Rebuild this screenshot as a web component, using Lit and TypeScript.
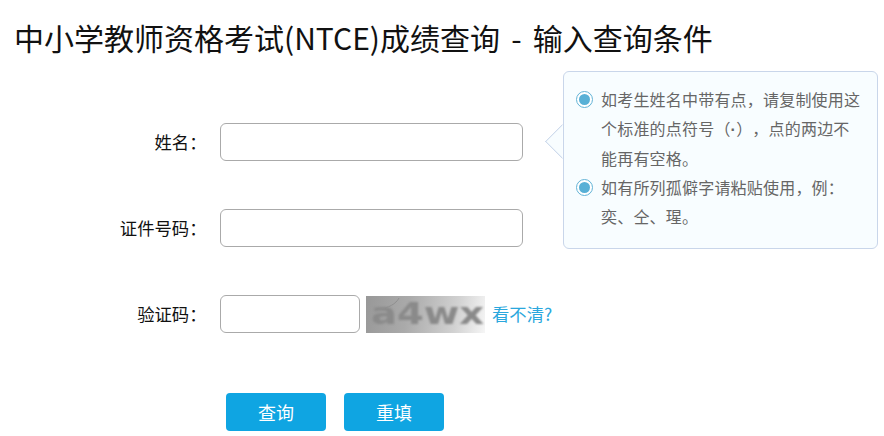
import { LitElement, html, css } from "lit";
import { customElement } from "lit/decorators.js";

@customElement("app-root")
export class AppRoot extends LitElement {
  static styles = css`
    :host {
      display: block;
      position: relative;
      width: 884px;
      height: 436px;
      overflow: hidden;
      background: #fff;
      font-family: "Noto Sans CJK SC", "Noto Sans", sans-serif;
      color: #111;
      text-spacing-trim: space-all;
    }
    .title {
      margin: 0;
      padding: 15px 0 0 14px;
      font-size: 30px;
      font-weight: 400;
      line-height: 44px;
      color: #111;
      white-space: nowrap;
      word-spacing: 4.5px;
    }
    .form {
      display: flex;
      flex-direction: column;
      gap: 48px;
      padding-top: 64px;
    }
    .row {
      display: flex;
      align-items: center;
      height: 38px;
    }
    .label {
      width: 206.5px;
      margin-right: 13.5px;
      text-align: right;
      font-size: 17.33px;
      line-height: 24px;
    }
    input {
      box-sizing: border-box;
      width: 303px;
      height: 38px;
      margin: 0;
      border: 1px solid #aaa;
      border-radius: 6px;
      background: #fff;
      outline: none;
    }
    input.short {
      width: 140px;
    }
    .captcha {
      position: relative;
      display: flex;
      align-items: center;
      justify-content: center;
      width: 119px;
      height: 37px;
      margin: 0 7px 0 6px;
      background: linear-gradient(100deg, #989898 0%, #aaa 35%, #d2d2d2 75%, #f6f6f6 100%);
      overflow: hidden;
    }
    .captcha span {
      font-family: "DejaVu Sans", sans-serif;
      font-weight: 700;
      font-size: 31px;
      line-height: 37px;
      color: #8a8a8a;
      transform: translate(2px, -1px) scaleX(1.24);
      filter: blur(1px);
    }
    .captcha svg {
      position: absolute;
      inset: 0;
      width: 100%;
      height: 100%;
      filter: blur(0.5px);
    }
    .link {
      font-size: 17.33px;
      line-height: 24px;
      color: #2aa7dd;
      text-decoration: none;
    }
    .actions {
      display: flex;
      gap: 18px;
      padding: 60px 0 0 226px;
    }
    button {
      width: 100px;
      height: 38px;
      padding: 0;
      border: none;
      border-radius: 4px;
      background: #0fa5e2;
      color: #fff;
      font-family: inherit;
      font-size: 18px;
    }
    .tip {
      position: absolute;
      left: 563px;
      top: 71px;
      box-sizing: border-box;
      width: 315px;
      height: 178px;
      padding: 13px 12px 0 12px;
      border: 1px solid #c9d6ea;
      border-radius: 6px;
      background: #f8fdff;
      color: #666;
      font-size: 16px;
      line-height: 29px;
      letter-spacing: 0.2px;
    }
    .tip::before {
      content: "";
      position: absolute;
      left: -14px;
      top: 57px;
      width: 25px;
      height: 25px;
      box-sizing: border-box;
      background: #f8fdff;
      border-left: 1px solid #c9d6ea;
      border-bottom: 1px solid #c9d6ea;
      transform: rotate(45deg);
      clip-path: polygon(0 0, 100% 100%, 0 100%);
    }
    .item {
      display: flex;
      gap: 8px;
      position: relative;
    }
    .item svg {
      flex: none;
      width: 17px;
      height: 17px;
      margin-top: 6px;
    }
    .line {
      white-space: nowrap;
    }
    .dot {
      font-family: "Liberation Sans", sans-serif;
      font-weight: 700;
    }
  `;

  private radio() {
    return html`<svg viewBox="0 0 17 17" aria-hidden="true">
      <circle cx="8.5" cy="8.5" r="8" fill="#fff" stroke="#62b3d6" stroke-width="1"></circle>
      <circle cx="8.5" cy="8.5" r="5.5" fill="#58b0d6"></circle>
    </svg>`;
  }

  render() {
    return html`
      <h1 class="title">中小学教师资格考试(NTCE)成绩查询 - 输入查询条件</h1>
      <form class="form" @submit=${(e: Event) => e.preventDefault()}>
        <div class="row"><span class="label">姓名：</span><input type="text" /></div>
        <div class="row"><span class="label">证件号码：</span><input type="text" /></div>
        <div class="row">
          <span class="label">验证码：</span>
          <input class="short" type="text" />
          <div class="captcha">
            <span>a4wx</span>
            <svg viewBox="0 0 119 37" aria-hidden="true">
              <path d="M14 13 C22 12 30 8 33 2" fill="none" stroke="#8f8f8f" stroke-width="1"></path>
            </svg>
          </div>
          <a class="link" href="#">看不清?</a>
        </div>
      </form>
      <div class="actions">
        <button type="button">查询</button>
        <button type="button">重填</button>
      </div>
      <aside class="tip">
        <div class="item">
          ${this.radio()}
          <div>
            <div class="line">如考生姓名中带有点，请复制使用这</div>
            <div class="line">个标准的点符号（<span class="dot">·</span>），点的两边不</div>
            <div class="line">能再有空格。</div>
          </div>
        </div>
        <div class="item">
          ${this.radio()}
          <div>
            <div class="line">如有所列孤僻字请粘贴使用，例：</div>
            <div class="line">奕、仝、瑆。</div>
          </div>
        </div>
      </aside>
    `;
  }
}
